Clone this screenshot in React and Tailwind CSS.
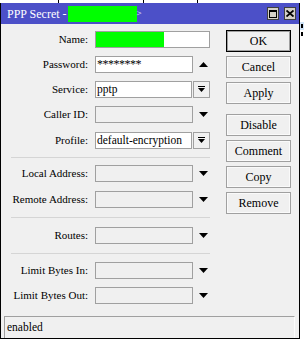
const serif = "[font-family:'Liberation_Serif','Times_New_Roman',serif]"

const Down = () => (
  <svg width="9" height="5" viewBox="0 0 9 5"><path d="M0 0h9L4.5 5z" fill="#000" /></svg>
)
const Up = () => (
  <svg width="9" height="5" viewBox="0 0 9 5"><path d="M0 5h9L4.5 0z" fill="#000" /></svg>
)
const DropBtn = () => (
  <div className="w-[17px] h-[17px] ml-[1px] border border-[#a0a0a0] bg-[#f0f0f0] flex items-center justify-center">
    <svg width="7" height="7" viewBox="0 0 7 7"><path d="M0 0h7v1H0z M0 2h7L3.5 6z" fill="#000" /></svg>
  </div>
)

const Row = ({ label, mt, children }) => (
  <div className={`flex items-center h-[17px] ${mt}`}>
    <div className="w-[88px] pr-[1px] text-right text-[11px] leading-none">{label}</div>
    <div className="ml-[6px] flex items-center">{children}</div>
  </div>
)

const Field = ({ value, white, w = 'w-[98px]' }) => (
  <div className={`${w} h-[17px] border border-[#a0a0a0] ${white ? 'bg-white' : 'bg-[#f0f0f0]'} text-[11.5px] leading-[15px] pl-[1px] overflow-hidden whitespace-nowrap`}>
    {value}
  </div>
)

const Arrow = ({ up }) => (
  <div className="w-[17px] flex justify-center pl-[4px]">{up ? <Up /> : <Down />}</div>
)

const Sep = ({ mt }) => <div className={`ml-[10px] h-px bg-[#d5d5d5] ${mt}`} />

const Btn = ({ children, def, mt = 'mt-[4px]' }) => (
  <div
    className={`w-[65px] h-[22px] ${mt} flex items-center justify-center text-[12px] bg-[#f0f0f0] ${
      def ? 'border border-black shadow-[inset_0_0_0_1px_#a0a0a0]' : 'border border-[#a0a0a0] shadow-[inset_0_0_0_1px_#fafafa]'
    }`}
  >
    {children}
  </div>
)

export default function App() {
  return (
    <div className={`relative w-[304px] h-[340px] bg-white overflow-hidden ${serif} text-black`}>
      {/* stuff behind the dialog */}
      <div className="absolute top-0 left-[58px] w-px h-[3px] bg-black" />
      <div className="absolute top-0 left-[143px] w-px h-[3px] bg-black" />
      <div className="absolute top-0 left-[197px] w-px h-[3px] bg-black" />
      <div className="absolute top-[22px] left-[300px] w-[4px] h-[8px] bg-[#cfe3f7]" />
      <div className="absolute top-[24px] left-[301px] w-[2px] h-[4px] bg-black" />
      <div className="absolute top-[32px] left-[301px] w-[2px] h-[4px] bg-black" />

      <div className="absolute left-0 top-[3px] w-[300px] h-[336px] border border-t-0 border-black bg-[#f0f0f0] flex flex-col">
        <div className="h-[21px] bg-[#4c50c8] flex items-center pl-[6px] pr-[3px] text-white text-[12px]">
          <span>PPP Secret -</span>
          <span className="ml-[1px] w-[69px] h-[16px] bg-[#00ff00]" />
          <span className="text-[9px]">&gt;</span>
          <div className="ml-auto flex gap-[5px]">
            <div className="w-[12px] h-[13px] bg-[#d4d0c8] border border-[#404040] flex items-center justify-center">
              <div className="w-[8px] h-[8px] border border-black border-t-2" />
            </div>
            <div className="w-[12px] h-[13px] bg-[#d4d0c8] border border-[#404040] flex items-center justify-center">
              <svg width="8" height="7" viewBox="0 0 8 7"><path d="M0.5 0.5l7 6M7.5 0.5l-7 6" stroke="#000" strokeWidth="1.8" /></svg>
            </div>
          </div>
        </div>

        <div className="flex flex-1">
          <div className="w-[209px] flex flex-col">
            <Row label="Name:" mt="mt-[7px]">
              <div className="w-[115px] h-[17px] border border-[#a0a0a0] bg-white">
                <div className="w-[68px] h-full bg-[#00ff00]" />
              </div>
            </Row>
            <Row label="Password:" mt="mt-[8px]">
              <Field white value={<span className="text-[12px] tracking-[-0.5px]">********</span>} />
              <Arrow up />
            </Row>
            <Row label="Service:" mt="mt-[8px]">
              <Field white value="pptp" w="w-[97px]" />
              <DropBtn />
            </Row>
            <Row label="Caller ID:" mt="mt-[8px]">
              <Field />
              <Arrow />
            </Row>
            <Row label="Profile:" mt="mt-[9px]">
              <Field white value="default-encryption" w="w-[97px]" />
              <DropBtn />
            </Row>
            <Sep mt="mt-[8px]" />
            <Row label="Local Address:" mt="mt-[7px]">
              <Field />
              <Arrow />
            </Row>
            <Row label="Remote Address:" mt="mt-[9px]">
              <Field />
              <Arrow />
            </Row>
            <Sep mt="mt-[9px]" />
            <Row label="Routes:" mt="mt-[9px]">
              <Field />
              <Arrow />
            </Row>
            <Sep mt="mt-[9px]" />
            <Row label="Limit Bytes In:" mt="mt-[8px]">
              <Field />
              <Arrow />
            </Row>
            <Row label="Limit Bytes Out:" mt="mt-[8px]">
              <Field />
              <Arrow />
            </Row>
          </div>

          <div className="ml-[16px] flex flex-col">
            <Btn def mt="mt-[6px]">OK</Btn>
            <Btn>Cancel</Btn>
            <Btn>Apply</Btn>
            <Btn mt="mt-[10px]">Disable</Btn>
            <Btn>Comment</Btn>
            <Btn>Copy</Btn>
            <Btn>Remove</Btn>
          </div>
        </div>

        <div className="h-[22px] ml-[3px] mr-[4px] border-t border-l border-[#a0a0a0] border-r border-r-[#fcfcfc] text-[11.5px] pl-[2px] flex items-center">
          enabled
        </div>
      </div>
    </div>
  )
}
